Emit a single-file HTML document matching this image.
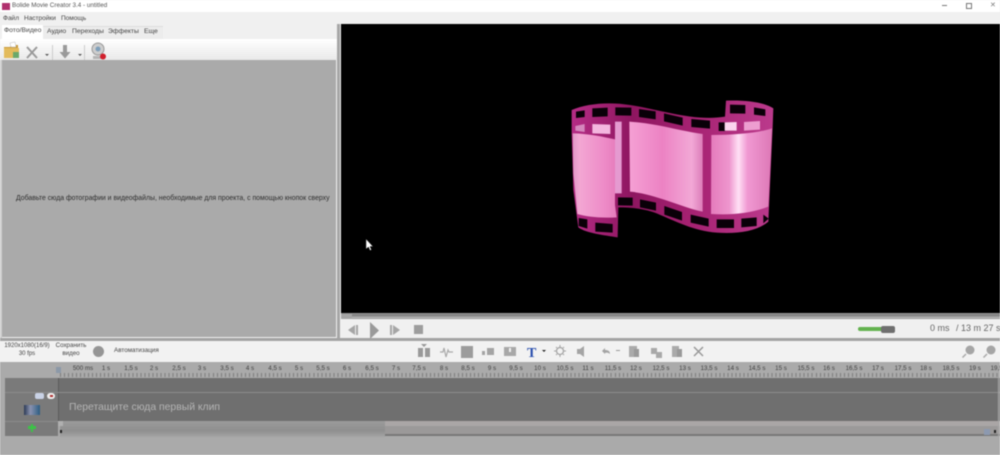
<!DOCTYPE html>
<html><head><meta charset="utf-8"><style>
html,body{margin:0;padding:0;width:1000px;height:455px;overflow:hidden;background:#f0f0f0}
#r{position:relative;width:1000px;height:455px;overflow:hidden;font-family:"Liberation Sans",sans-serif;filter:blur(.55px);background:#f0f0f0}
#r div,#r span,#r svg{position:absolute}
.t{white-space:nowrap;color:#444;line-height:1}
.c{transform:translateX(-50%);text-align:center}
#rul span{top:4px;font-size:6.2px;color:#3f3f3f;white-space:nowrap;transform:translateX(-50%);line-height:1}
</style></head><body><div id="r">
<div style="left:0;top:0;width:1000px;height:12px;background:#fff"></div>
<div style="left:2px;top:3px;width:8px;height:7px;background:#b0306e"></div>
<div class="t" style="left:12px;top:3px;font-size:6.3px;color:#555">Bolide Movie Creator 3.4 - untitled</div>
<div style="left:942px;top:5px;width:5px;height:1px;background:#777"></div>
<div style="left:966px;top:3px;width:4px;height:4px;border:1px solid #777"></div>
<div class="t" style="left:990px;top:2px;font-size:7px;color:#777">✕</div>

<div class="t" style="left:3px;top:16px;font-size:6.5px">Файл</div>
<div class="t" style="left:24px;top:16px;font-size:6.5px">Настройки</div>
<div class="t" style="left:61px;top:16px;font-size:6.5px">Помощь</div>

<div style="left:2px;top:26px;width:161px;height:13px;background:#ececec;border-top:1px solid #ddd"></div>
<div style="left:2px;top:25px;width:41px;height:14px;background:#fff"></div>
<div class="t" style="left:4px;top:28px;font-size:6.8px">Фото/Видео</div>
<div class="t" style="left:47px;top:29px;font-size:6.8px">Аудио</div>
<div class="t" style="left:72px;top:29px;font-size:6.8px">Переходы</div>
<div class="t" style="left:108px;top:29px;font-size:6.8px">Эффекты</div>
<div class="t" style="left:144px;top:29px;font-size:6.8px">Еще</div>

<div style="left:0;top:39px;width:337px;height:21px;background:linear-gradient(#fff,#e9e9e9)"></div>
<svg style="left:2px;top:41px" width="110" height="20" viewBox="0 0 110 20">
<path d="M2 6h6l2-2h6v3H2z" fill="#c99a3a"/><path d="M2 7h15v10H2z" fill="#e3bb5c"/><path d="M8 2l5-1 1 5H9z" fill="#fff" stroke="#bbb" stroke-width=".5"/><rect x="11" y="11" width="6" height="6" fill="#6aa86a"/>
<path d="M25 6l10 11M35 6L25 17" stroke="#9a9a9a" stroke-width="2" fill="none"/>
<path d="M43 13l4 0-2 2z" fill="#555"/>
<rect x="50" y="4" width="1" height="15" fill="#ccc"/>
<path d="M61 4h4v7h3.500l-5.500 6.500L57.500 11H61z" fill="#9a9a9a"/>
<path d="M76 13l4 0-2 2z" fill="#555"/>
<rect x="82" y="4" width="1" height="15" fill="#ccc"/>
<circle cx="96" cy="8" r="6" fill="#cdcdcd" stroke="#999"/><circle cx="96" cy="8" r="2.500" fill="#7f9fba"/><path d="M91 15h10v3H91z" fill="#b5b5b5"/><circle cx="101" cy="15.500" r="3" fill="#d11f2c"/>
</svg>

<div style="left:0;top:60px;width:2px;height:278px;background:#cfcfcf"></div>
<div style="left:2px;top:60px;width:334px;height:277px;background:#aaa"></div>
<div class="t" style="left:16px;top:196px;font-size:6.9px;color:#2e2e2e">Добавьте сюда фотографии и видеофайлы, необходимые для проекта, с помощью кнопок сверху</div>
<div style="left:337px;top:24px;width:3px;height:314px;background:#a6a6a6"></div>

<div style="left:341px;top:24px;width:659px;height:289px;background:#000"></div>
<svg style="left:550px;top:90px" width="240" height="160" viewBox="0 0 720 480">
<defs>
<linearGradient id="m" x1="0" x2="1" y1="0" y2="0"><stop offset="0" stop-color="#b52c85"/><stop offset=".3" stop-color="#8e1660"/><stop offset=".6" stop-color="#a62272"/><stop offset="1" stop-color="#bb3a8c"/></linearGradient>
<linearGradient id="a" x1="0" x2="1" y1="0" y2="0"><stop offset="0" stop-color="#e097c6"/><stop offset=".15" stop-color="#f3a7d3"/><stop offset=".7" stop-color="#ee8cc8"/><stop offset="1" stop-color="#e67cbc"/></linearGradient>
<linearGradient id="b" x1="0" x2="1" y1="0" y2="0"><stop offset="0" stop-color="#f5a0d4"/><stop offset=".45" stop-color="#ec82c3"/><stop offset=".85" stop-color="#f2a8d6"/><stop offset="1" stop-color="#dd7db9"/></linearGradient>
<linearGradient id="d" x1="0" x2="1" y1="0" y2="0"><stop offset="0" stop-color="#e57bbc"/><stop offset=".3" stop-color="#ee96ce"/><stop offset=".45" stop-color="#ffe0f5"/><stop offset=".6" stop-color="#f098d2"/><stop offset="1" stop-color="#dd78b6"/></linearGradient>
</defs>
<path d="M65 60C110 40 180 35 240 45C330 58 430 95 525 80L528 32C580 30 640 35 670 55L668 110L655 395C620 425 560 432 500 428C430 422 380 395 320 370C280 355 240 352 205 352L203 442C160 435 110 430 85 412L70 300L65 130Z" fill="url(#m)"/>
<path d="M68 130C110 130 160 140 195 148V345L200 382C150 385 110 380 82 372L70 250Z" fill="url(#a)"/>
<path d="M195 95H215V310H195Z" fill="#e59ad0"/>
<path d="M238 95C320 100 400 125 458 132V365C390 350 310 310 240 305Z" fill="url(#b)"/>
<path d="M484 135C550 135 620 130 666 115L655 350C600 372 540 375 483 372Z" fill="url(#d)"/>
<g fill="#0a0008">
<path d="M78 65l26-4v20l-26 3zM127 55l46-2v26l-46 2zM196 52l48 1v24l-48-1zM267 57l50 7v24l-50-7zM342 70l56 13v24l-56-13zM424 87l56 5v24l-56-5zM506 97h20v26h-20zM540 44l46 1v26l-46-1zM612 52l34 6v20l-34-4z"/>
<path d="M204 322l44 1v24l-44-1zM270 328l48 10v24l-48-10zM343 348l53 18v26l-53-18zM422 374l54 12v24l-54-12zM500 388h52v26h-52zM574 386l46-4v26l-46 4zM640 374l16 12-16 14zM86 384l26 4v28l-26-8zM136 398l52 4v26l-52-3z"/>
</g>
<g fill="#f4b6df"><path d="M127 102l54 2v28l-54-2z"/><path d="M76 108l28-6v24l-28-4z" fill="#d587bd"/><path d="M524 97l36-1v26h-36z" fill="#fbd6ee"/><path d="M582 96l48-3v26l-48 3z" fill="#ed9ed0"/></g>
</svg>
<svg style="left:365px;top:239px" width="9" height="12" viewBox="0 0 9 12"><path d="M1 0v10l2.500-2 1.500 3.500 1.500-.7L5 7.500h3z" fill="#fff" stroke="#222" stroke-width=".5"/></svg>

<div style="left:341px;top:313px;width:659px;height:6px;background:linear-gradient(#9a9a9a,#7d7d7d 40%,#bbb 80%,#888)"></div>
<div style="left:341px;top:314px;width:11px;height:5px;background:#a5a5a5"></div>
<svg style="left:341px;top:320px" width="90" height="19" viewBox="0 0 90 19">
<path d="M7 10l7-5v10zM15 5h2v10h-2z" fill="#a6a6a6"/>
<path d="M29 2l9 8.500-9 8.500z" fill="#9a9a9a"/>
<path d="M49 5h2v10h-2zM52 5l7 5-7 5z" fill="#a6a6a6"/>
<rect x="73" y="5" width="9" height="9" fill="#9d9d9d"/>
</svg>
<div style="left:858px;top:327px;width:26px;height:4px;background:#63b24f;border-radius:2px"></div>
<div style="left:881px;top:326px;width:14px;height:7px;background:#6f6f6f;border-radius:2px"></div>
<div class="t" style="left:930px;top:324px;font-size:9px;color:#666">0 ms</div>
<div class="t" style="left:956px;top:324px;font-size:9px;color:#666">/ 13 m 27 s</div>

<div style="left:0;top:338px;width:1000px;height:3px;background:#a3a3a3"></div>
<div style="left:0;top:341px;width:1000px;height:21px;background:#f2f2f2"></div>
<div class="t c" style="left:27px;top:343px;font-size:6px;color:#444">1920x1080(16/9)</div>
<div class="t c" style="left:27px;top:351px;font-size:6px;color:#444">30 fps</div>
<div class="t c" style="left:71px;top:343px;font-size:6.200px;color:#444">Сохранить</div>
<div class="t c" style="left:71px;top:351px;font-size:6.200px;color:#444">видео</div>
<div style="left:93px;top:346px;width:11px;height:11px;border-radius:50%;background:#959595"></div>
<div class="t" style="left:114px;top:348px;font-size:6.300px;color:#444">Автоматизация</div>
<svg style="left:415px;top:342px" width="585" height="20" viewBox="415 342 585 20">
<path d="M418 348h5v9h-5zM425 348h5v9h-5zM421 344h6l-3 3z" fill="#999"/>
<path d="M440 352h3l1-4 2 9 2-7 1 2h4" fill="none" stroke="#aaa" stroke-width="1.200"/>
<rect x="461" y="346" width="12" height="12" fill="#9c9c9c"/>
<path d="M482 351h3v4h-3zM487 348h7v7h-7z" fill="#a4a4a4"/>
<path d="M504 347h12v9h-12z" fill="#a8a8a8"/><path d="M509 348h2v4h-2z" fill="#f2f2f2"/>
<text x="527" y="357" font-family="Liberation Serif,serif" font-weight="bold" font-size="14" fill="#2a4fae">T</text>
<path d="M542 350h4l-2 2z" fill="#222"/>
<circle cx="560" cy="351" r="3.500" fill="none" stroke="#a5a5a5" stroke-width="1.300"/><path d="M560 345v2M560 355v2M554 351h2M564 351h2M556 347l1 1M564 355l-1-1M564 347l-1 1M556 355l1-1" stroke="#a5a5a5"/>
<path d="M577 349h3l4-3v11l-4-3h-3z" fill="#a4a4a4"/>
<path d="M602 351l3-3v2c3 0 5 1 5 4-1-1-3-2-5-1v1z" fill="#a4a4a4"/>
<rect x="616" y="350" width="4" height="1" fill="#999"/>
<path d="M629 346h8v11h-8z" fill="#aaa"/><path d="M634 349h5v8h-5z" fill="#999"/>
<path d="M651 348h6v6h-6zM656 352h6v6h-6z" fill="#a8a8a8"/>
<path d="M672 346h7v11h-7z" fill="#aaa"/><path d="M677 349h5v8h-5z" fill="#999"/>
<path d="M694 347l9 9M703 347l-9 9" stroke="#999" stroke-width="1.500"/>
<circle cx="970" cy="350" r="4.500" fill="#a5a5a5"/><path d="M966 354l-3.500 3.500" stroke="#aaa" stroke-width="1.500"/>
<circle cx="991" cy="350" r="4.500" fill="#a5a5a5"/><path d="M987 354l-3.500 3.500" stroke="#aaa" stroke-width="1.500"/>
</svg>

<div style="left:0;top:362px;width:1000px;height:93px;background:#aaa"></div>
<div id="rul" style="left:0;top:362px;width:1000px;height:16px">
<span style="left:83px">500 ms</span><span style="left:106px">1 s</span><span style="left:131px">1,5 s</span><span style="left:154px">2 s</span><span style="left:179px">2,5 s</span><span style="left:202px">3 s</span><span style="left:227px">3,5 s</span><span style="left:250px">4 s</span><span style="left:275px">4,5 s</span><span style="left:299px">5 s</span><span style="left:323px">5,5 s</span><span style="left:347px">6 s</span><span style="left:372px">6,5 s</span><span style="left:396px">7 s</span><span style="left:419px">7,5 s</span><span style="left:444px">8 s</span><span style="left:468px">8,5 s</span><span style="left:492px">9 s</span><span style="left:516px">9,5 s</span><span style="left:540px">10 s</span><span style="left:565px">10,5 s</span><span style="left:588px">11 s</span><span style="left:613px">11,5 s</span><span style="left:636px">12 s</span><span style="left:661px">12,5 s</span><span style="left:685px">13 s</span><span style="left:709px">13,5 s</span><span style="left:733px">14 s</span><span style="left:757px">14,5 s</span><span style="left:781px">15 s</span><span style="left:806px">15,5 s</span><span style="left:829px">16 s</span><span style="left:854px">16,5 s</span><span style="left:878px">17 s</span><span style="left:903px">17,5 s</span><span style="left:926px">18 s</span><span style="left:951px">18,5 s</span><span style="left:975px">19 s</span><span style="left:999px">19,5 s</span>
<div style="left:60px;top:11px;width:940px;height:4px;background:repeating-linear-gradient(90deg,#7d7d7d 0 1px,transparent 1px 4.020px)"></div>
</div>
<div style="left:56px;top:367px;width:5px;height:6px;background:#8c99a8"></div>
<div style="left:5px;top:378px;width:995px;height:43px;background:#6f6f6f"></div>
<div style="left:5px;top:378px;width:53px;height:58px;background:#7a7a7a"></div>
<div style="left:58px;top:378px;width:1px;height:43px;background:#5c5c5c"></div>
<div style="left:5px;top:392px;width:995px;height:1px;background:#8c8c8c"></div>
<div style="left:5px;top:421px;width:55px;height:1px;background:#8c8c8c"></div>
<div style="left:35px;top:393px;width:9px;height:6px;background:#c9d2e6;border-radius:2px"></div>
<div style="left:47px;top:393px;width:8px;height:6px;background:#eee;border-radius:3px"></div>
<div style="left:50px;top:395px;width:3px;height:2px;background:#b03030"></div>
<div style="left:24px;top:405px;width:16px;height:10px;background:linear-gradient(90deg,#2b3a55,#8a93b0 40%,#2c5c82)"></div>
<div class="t" style="left:69px;top:403px;font-size:10.400px;color:#b4b4b4">Перетащите сюда первый клип</div>
<div style="left:28px;top:426px;width:8px;height:2.500px;background:#3cc247"></div>
<div style="left:30.800px;top:423.500px;width:2.500px;height:8px;background:#3cc247"></div>

<div style="left:60px;top:421px;width:940px;height:5px;background:#aaa6a6"></div>
<div style="left:60px;top:426px;width:940px;height:8px;background:#9b9999"></div>
<div style="left:60px;top:434px;width:940px;height:2px;background:#787878"></div>
<div style="left:60px;top:421px;width:325px;height:16px;background:linear-gradient(#9b9b9b,#8f8f8f 60%,#a4a4a4)"></div>
<div style="left:58px;top:421px;width:5px;height:5px;background:#b0b0b0"></div>
<div style="left:60px;top:430px;width:2px;height:3px;background:#222"></div>
<div style="left:984px;top:429px;width:6px;height:6px;background:#8c99b0"></div>
<div style="left:994px;top:430px;width:2px;height:3px;background:#222"></div>
<div style="left:998px;top:378px;width:1px;height:58px;background:#aaa"></div>
</div></body></html>
